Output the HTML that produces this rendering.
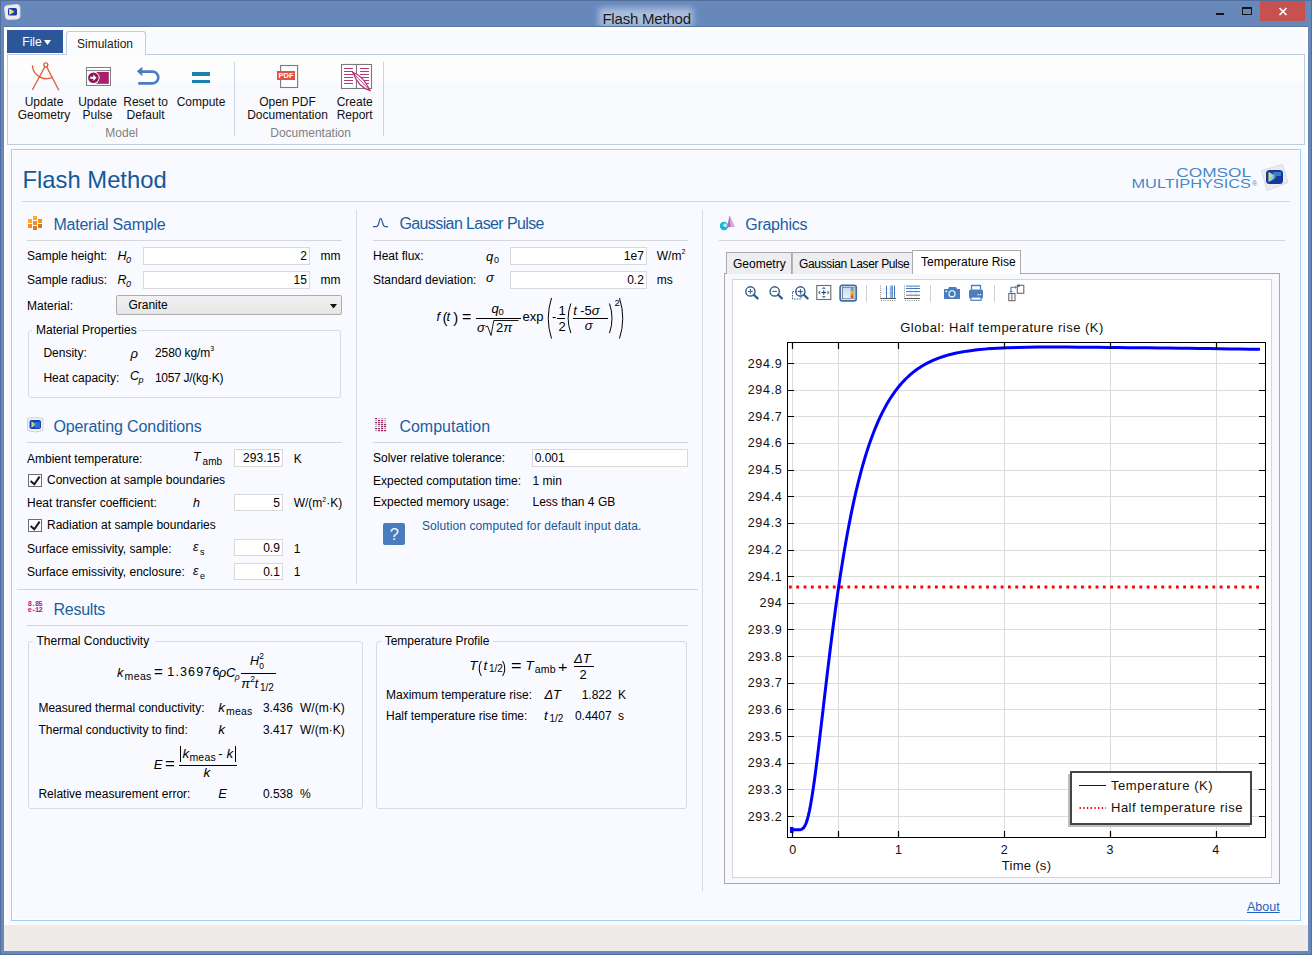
<!DOCTYPE html>
<html><head><meta charset="utf-8"><title>Flash Method</title><style>*{margin:0;padding:0}
html,body{width:1312px;height:955px;overflow:hidden;background:#6a8bbf}
body{position:relative;font-family:"Liberation Sans",sans-serif}
.t{position:absolute;white-space:nowrap;line-height:1;font-family:"Liberation Sans",sans-serif}
.b{position:absolute;box-sizing:border-box}
sup{line-height:0}
</style></head><body>
<div class="b" style="left:0px;top:0px;width:1312px;height:955px;background:#6888bc"></div>
<div class="b" style="left:0px;top:0px;width:1312px;height:1px;background:#52709c"></div>
<div class="b" style="left:0px;top:0px;width:1px;height:955px;background:#52709c"></div>
<div class="b" style="left:1311px;top:0px;width:1px;height:955px;background:#52709c"></div>
<div class="b" style="left:0px;top:954px;width:1312px;height:1px;background:#52709c"></div>
<div class="b" style="left:599px;top:8px;width:94px;height:19px;background:rgba(225,235,250,0.55);filter:blur(3px)"></div>
<div class="t" style="left:602.4px;top:11.00px;font-size:15px;color:#1a1a1a;letter-spacing:-0.2px">Flash Method</div>
<svg class="b" style="left:3px;top:3px;" width="19" height="18" viewBox="0 0 19 18"><defs><linearGradient id="ag" x1="0" y1="0" x2="1" y2="0"><stop offset="0" stop-color="#fff070"/><stop offset="0.45" stop-color="#f0e050"/><stop offset="0.7" stop-color="#60c0f0"/><stop offset="1" stop-color="#1030a0"/></linearGradient></defs><path d="M1.5 6 Q1 3 4 2.5 L14 1.5 Q16.5 1.5 17 4 L17 13 Q17 15.5 14.5 16 L6 16.5 Q3 16.8 2.5 14 Z" fill="#ececee" stroke="#dcdce0" stroke-width="0.8"/><rect x="5" y="5" width="9" height="7.5" rx="1.5" fill="#1a3aa8"/><path d="M6.2 5.8 L12.5 8.7 L6.2 11.7 Z" fill="url(#ag)"/></svg>
<div class="b" style="left:1216px;top:13px;width:8px;height:2px;background:#151515"></div>
<div class="b" style="left:1242px;top:7px;width:10px;height:8px;border:1px solid #151515;border-top-width:2px"></div>
<div class="b" style="left:1260px;top:1px;width:45px;height:20px;background:#c75050"></div>
<svg class="b" style="left:1278px;top:7px;" width="10" height="9" viewBox="0 0 10 9"><path d="M1.5 1 L8.5 8 M8.5 1 L1.5 8" stroke="#fff" stroke-width="1.7"/></svg>
<div class="b" style="left:4px;top:27px;width:1304px;height:924px;background:#ffffff"></div>
<div class="b" style="left:4px;top:26px;width:1304px;height:1px;background:#5b78a4"></div>
<div class="b" style="left:7px;top:30px;width:1298px;height:25px;background:#f9fafd"></div>
<div class="b" style="left:7px;top:30px;width:56px;height:23px;background:#2b579a"></div>
<div class="t" style="left:22.3px;top:36.14px;font-size:12px;color:#fff;">File</div>
<svg class="b" style="left:44px;top:40px;" width="8" height="6" viewBox="0 0 8 6"><polygon points="0,0 7,0 3.5,5" fill="#fff"/></svg>
<div class="b" style="left:7px;top:54px;width:1298px;height:91px;background:linear-gradient(#fdfdfe 0px,#fdfdfe 26px,#f9fafe 27px);border:1px solid #bfcde0"></div>
<div class="b" style="left:66px;top:31px;width:80px;height:24px;background:#fbfcfe;border:1px solid #bfcde0;border-bottom:none;border-radius:3px 3px 0 0"></div>
<div class="t" style="left:77px;top:37.84px;font-size:12px;color:#222;">Simulation</div>
<div class="b" style="left:234px;top:62px;width:1px;height:74px;background:#c9d5e4"></div>
<div class="b" style="left:383px;top:62px;width:1px;height:74px;background:#c9d5e4"></div>
<div class="t" style="left:44px;transform:translateX(-50%);top:96.14px;font-size:12px;color:#111;">Update</div>
<div class="t" style="left:44px;transform:translateX(-50%);top:109.14px;font-size:12px;color:#111;">Geometry</div>
<div class="t" style="left:97.5px;transform:translateX(-50%);top:96.14px;font-size:12px;color:#111;">Update</div>
<div class="t" style="left:97.5px;transform:translateX(-50%);top:109.14px;font-size:12px;color:#111;">Pulse</div>
<div class="t" style="left:145.6px;transform:translateX(-50%);top:96.14px;font-size:12px;color:#111;">Reset to</div>
<div class="t" style="left:145.6px;transform:translateX(-50%);top:109.14px;font-size:12px;color:#111;">Default</div>
<div class="t" style="left:201px;transform:translateX(-50%);top:96.14px;font-size:12px;color:#111;">Compute</div>
<div class="t" style="left:287.5px;transform:translateX(-50%);top:96.14px;font-size:12px;color:#111;">Open PDF</div>
<div class="t" style="left:287.5px;transform:translateX(-50%);top:109.14px;font-size:12px;color:#111;">Documentation</div>
<div class="t" style="left:354.7px;transform:translateX(-50%);top:96.14px;font-size:12px;color:#111;">Create</div>
<div class="t" style="left:354.7px;transform:translateX(-50%);top:109.14px;font-size:12px;color:#111;">Report</div>
<div class="t" style="left:121.7px;transform:translateX(-50%);top:127.04px;font-size:12px;color:#808080;">Model</div>
<div class="t" style="left:310.6px;transform:translateX(-50%);top:127.04px;font-size:12px;color:#808080;">Documentation</div>
<svg class="b" style="left:29px;top:61px;" width="32" height="31" viewBox="0 0 32 31"><g fill="none" stroke="#e0603c" stroke-width="1.35"><circle cx="16.8" cy="3.8" r="2"/><path d="M16 5.6 L3.3 29 M17.6 5.6 L29.8 29.3"/><path d="M3.4 4.2 A14 14 0 0 0 23.3 16.3"/></g></svg>
<svg class="b" style="left:85px;top:66px;" width="28" height="22" viewBox="0 0 28 22"><rect x="1.5" y="1.5" width="24" height="18" fill="#fff" stroke="#808080" stroke-width="1"/><line x1="1.5" y1="4.6" x2="26" y2="4.6" stroke="#808080" stroke-width="1"/><rect x="11.3" y="6" width="12.5" height="11.8" fill="#aa1f6c"/><circle cx="8.4" cy="11.8" r="6.2" fill="#fff"/><circle cx="8.4" cy="11.8" r="5.3" fill="#8c1a5b"/><path d="M5.2 11.8 H9.2" stroke="#fff" stroke-width="2"/><polygon points="8.3,8.6 11.6,11.8 8.3,15" fill="#fff"/></svg>
<svg class="b" style="left:135px;top:64px;" width="28" height="24" viewBox="0 0 28 24"><path d="M6.5 7.7 H17.5 A5.8 5.8 0 0 1 17.5 19.3 H3.3" fill="none" stroke="#4a7dbf" stroke-width="2.7"/><polygon points="1.8,7.3 7.3,2.7 7.3,12.2" fill="#4a7dbf"/></svg>
<div class="b" style="left:192px;top:72px;width:18px;height:3.5px;background:#1b82ab"></div>
<div class="b" style="left:192px;top:79.5px;width:18px;height:3.5px;background:#1b82ab"></div>
<svg class="b" style="left:276px;top:64px;" width="24" height="26" viewBox="0 0 24 26"><rect x="4.6" y="1.5" width="17" height="22" fill="#fff" stroke="#7a7a7a" stroke-width="1.1"/><rect x="1" y="7" width="18" height="9" fill="#e24f43"/><text x="10" y="14.3" font-size="7.5" font-family="Liberation Sans" font-weight="bold" fill="#fff" text-anchor="middle">PDF</text></svg>
<svg class="b" style="left:339px;top:62px;" width="35" height="30" viewBox="0 0 35 30"><g fill="#fff" stroke="#7a7a7a" stroke-width="1.1"><rect x="2.5" y="2.5" width="15" height="24"/><rect x="17.5" y="2.5" width="15" height="24"/></g><path d="M5 6.5 H14 M5 9.5 H14 M5 12.5 H14 M5 15.5 H14 M5 18.5 H14 M5 21.5 H14 M21 6.5 H30 M21 9.5 H30 M21 12.5 H30 M21 15.5 H30 M21 18.5 H30 M21 21.5 H30 " stroke="#b0206c" stroke-width="0.9"/><path d="M14 10.5 Q24 13.5 31 28.5 Q19 25 14 10.5 Z" fill="#fff" stroke="#b0206c" stroke-width="1.1"/><path d="M12 9 L31 28.5" stroke="#b0206c" stroke-width="0.9"/></svg>
<div class="b" style="left:7px;top:146px;width:1298px;height:779px;background:#f9fafd"></div>
<div class="b" style="left:11px;top:149px;width:1290px;height:772px;background:#f9faff;border:1px solid #9fd0f5;box-shadow:inset 0 0 0 1px #fff"></div>
<div class="b" style="left:4px;top:925px;width:1304px;height:26px;background:#efebe9"></div>
<div class="t" style="left:22.5px;top:168.05px;font-size:23.8px;color:#135899;">Flash Method</div>
<div class="b" style="left:22px;top:201px;width:1268px;height:1px;background:#d4d6da"></div>
<svg class="b" style="left:1125px;top:165px;" width="140" height="26" viewBox="0 0 140 26"><g font-family="Liberation Sans" font-size="12" fill="#2c78be" fill-opacity="0.9"><text x="51.3" y="11.7" textLength="74.7" lengthAdjust="spacingAndGlyphs">COMSOL</text><text x="6.5" y="23" textLength="119.5" lengthAdjust="spacingAndGlyphs">MULTIPHYSICS</text><text x="127" y="21" font-size="7">&#174;</text></g></svg>
<svg class="b" style="left:1259px;top:163px;" width="31" height="29" viewBox="0 0 31 29"><defs><linearGradient id="cg2" x1="0" y1="0" x2="1" y2="0.2"><stop offset="0" stop-color="#f4ec50"/><stop offset="0.55" stop-color="#78c8ec"/><stop offset="1" stop-color="#0c2c94"/></linearGradient></defs><polygon points="2.5,7.5 23.5,1.5 29,19.5 8,27.5" fill="#ececef" stroke="#dcdce0"/><rect x="7" y="7" width="17" height="14" rx="3.5" fill="#15379e"/><path d="M9.5 9 L19 14 L9.5 19 Z" fill="url(#cg2)"/><path d="M14 9 H22 V13 H14 Z" fill="#5ab4e8" opacity="0.55"/></svg>
<div class="b" style="left:356px;top:210px;width:1px;height:374px;background:#d9dadd"></div>
<div class="b" style="left:702px;top:210px;width:1px;height:681px;background:#d9dadd"></div>
<div class="b" style="left:17px;top:589px;width:681px;height:1px;background:#d4d6da"></div>
<svg class="b" style="left:27px;top:215px;" width="16" height="16" viewBox="0 0 16 16"><g><rect x="1" y="4" width="4" height="4" fill="#ffab1c"/><rect x="6" y="1" width="4" height="4" fill="#ffab1c"/><rect x="11" y="4" width="4" height="4" fill="#f58e1e"/><rect x="6" y="6" width="4" height="4" fill="#f58e1e"/><rect x="1" y="9" width="4" height="4" fill="#f58e1e"/><rect x="11" y="9" width="4" height="4" fill="#d47a1c"/><rect x="6" y="11" width="4" height="4" fill="#d47a1c"/></g></svg>
<div class="t" style="left:53.5px;top:216.86px;font-size:16px;color:#1b5e9f;letter-spacing:-0.25px">Material Sample</div>
<div class="b" style="left:27px;top:240px;width:315px;height:1px;background:#d4d6da"></div>
<div class="t" style="left:27px;top:249.84px;font-size:12px;color:#000;">Sample height:</div>
<div class="t" style="left:117.6px;top:250.42px;font-size:12.5px;color:#000;font-style:italic">H</div>
<div class="t" style="left:126px;top:256.38px;font-size:9px;color:#000;font-style:italic">0</div>
<div class="b" style="left:143px;top:247px;width:167px;height:18px;background:#fff;border:1px solid #d9d9d9"></div>
<div class="t" style="right:1005.2px;top:249.94px;font-size:12px;color:#000;">2</div>
<div class="t" style="left:320.5px;top:249.84px;font-size:12px;color:#000;">mm</div>
<div class="t" style="left:27px;top:273.84px;font-size:12px;color:#000;">Sample radius:</div>
<div class="t" style="left:117.6px;top:274.42px;font-size:12.5px;color:#000;font-style:italic">R</div>
<div class="t" style="left:126px;top:280.38px;font-size:9px;color:#000;font-style:italic">0</div>
<div class="b" style="left:143px;top:271px;width:167px;height:18px;background:#fff;border:1px solid #d9d9d9"></div>
<div class="t" style="right:1005.2px;top:273.94px;font-size:12px;color:#000;">15</div>
<div class="t" style="left:320.5px;top:273.84px;font-size:12px;color:#000;">mm</div>
<div class="t" style="left:27px;top:299.54px;font-size:12px;color:#000;">Material:</div>
<div class="b" style="left:116px;top:295px;width:226px;height:20px;background:linear-gradient(#f2f2f2,#e6e6e6);border:1px solid #acacac;border-radius:2px"></div>
<div class="t" style="left:128.4px;top:299.04px;font-size:12px;color:#000;">Granite</div>
<svg class="b" style="left:330px;top:304px;" width="8" height="5" viewBox="0 0 8 5"><polygon points="0,0 7,0 3.5,4.5" fill="#111"/></svg>
<div class="b" style="left:28px;top:330px;width:313px;height:68px;border:1px solid #d5dbe2;border-radius:3px"></div>
<div class="b" style="left:32px;top:326px;width:106px;height:8px;background:#f9faff"></div>
<div class="t" style="left:36px;top:324.44px;font-size:12px;color:#000;">Material Properties</div>
<div class="t" style="left:43.4px;top:347.34px;font-size:12px;color:#000;">Density:</div>
<div class="t" style="left:130.4px;top:346.50px;font-size:13px;color:#000;font-style:italic">&rho;</div>
<div class="t" style="left:155px;top:347.34px;font-size:12px;color:#000;letter-spacing:-0.1px">2580 kg/m<sup style="font-size:7px;vertical-align:6px">3</sup></div>
<div class="t" style="left:43.4px;top:371.54px;font-size:12px;color:#000;">Heat capacity:</div>
<div class="t" style="left:130px;top:369.92px;font-size:12.5px;color:#000;font-style:italic">C</div>
<div class="t" style="left:138.5px;top:376.38px;font-size:9px;color:#000;font-style:italic">p</div>
<div class="t" style="left:155px;top:371.54px;font-size:12px;color:#000;letter-spacing:-0.3px">1057 J/(kg&middot;K)</div>
<svg class="b" style="left:26px;top:416px;" width="19" height="18" viewBox="0 0 19 18"><defs><linearGradient id="og" x1="0" y1="0" x2="1" y2="0"><stop offset="0" stop-color="#f4ee60"/><stop offset="0.45" stop-color="#6fc0f0"/><stop offset="1" stop-color="#0a2a90"/></linearGradient></defs><path d="M1.5 2.5 Q9 0.5 17 2.5 V14.5 Q9 17.5 1.5 14.5 Z" fill="#f2f2f4" stroke="#d2d2d6" stroke-width="1"/><rect x="3.5" y="4" width="11.5" height="9" rx="2" fill="#1840b0"/><path d="M5.5 5.5 L11.5 8.5 L5.5 11.5 Z" fill="url(#og)"/><path d="M9 6 H14 V12 H9 Z" fill="#3a8ae0" opacity="0.6"/></svg>
<div class="t" style="left:53.4px;top:419.06px;font-size:16px;color:#1b5e9f;letter-spacing:-0.1px">Operating Conditions</div>
<div class="b" style="left:27px;top:442px;width:315px;height:1px;background:#d4d6da"></div>
<div class="t" style="left:27px;top:452.54px;font-size:12px;color:#000;">Ambient temperature:</div>
<div class="t" style="left:193px;top:451.42px;font-size:12.5px;color:#000;font-style:italic">T</div>
<div class="t" style="left:202.6px;top:457.04px;font-size:10px;color:#000;">amb</div>
<div class="b" style="left:234px;top:449px;width:49px;height:18px;background:#fff;border:1px solid #d9d9d9"></div>
<div class="t" style="right:1032.2px;top:451.94px;font-size:12px;color:#000;">293.15</div>
<div class="t" style="left:293.7px;top:452.54px;font-size:12px;color:#000;">K</div>
<div class="b" style="left:28px;top:474px;width:14px;height:13px;background:#fff;border:1px solid #6e6e6e"></div>
<svg class="b" style="left:28px;top:474px;" width="14" height="13" viewBox="0 0 14 13"><path d="M2.6 7 L6.3 10.3 L11.6 2.6" stroke="#1a1a1a" stroke-width="2" fill="none"/></svg>
<div class="t" style="left:47px;top:474.44px;font-size:12px;color:#000;">Convection at sample boundaries</div>
<div class="t" style="left:27px;top:497.24px;font-size:12px;color:#000;">Heat transfer coefficient:</div>
<div class="t" style="left:193px;top:496.82px;font-size:12.5px;color:#000;font-style:italic">h</div>
<div class="b" style="left:234px;top:494px;width:49px;height:17px;background:#fff;border:1px solid #d9d9d9"></div>
<div class="t" style="right:1032.2px;top:496.94px;font-size:12px;color:#000;">5</div>
<div class="t" style="left:293.7px;top:497.24px;font-size:12px;color:#000;">W/(m<sup style="font-size:7px;vertical-align:5px">2</sup>&middot;K)</div>
<div class="b" style="left:28px;top:519px;width:14px;height:13px;background:#fff;border:1px solid #6e6e6e"></div>
<svg class="b" style="left:28px;top:519px;" width="14" height="13" viewBox="0 0 14 13"><path d="M2.6 7 L6.3 10.3 L11.6 2.6" stroke="#1a1a1a" stroke-width="2" fill="none"/></svg>
<div class="t" style="left:47px;top:519.14px;font-size:12px;color:#000;">Radiation at sample boundaries</div>
<div class="t" style="left:27px;top:542.84px;font-size:12px;color:#000;">Surface emissivity, sample:</div>
<div class="t" style="left:193px;top:541.42px;font-size:12.5px;color:#000;font-style:italic">&epsilon;</div>
<div class="t" style="left:200px;top:548.38px;font-size:9px;color:#000;">s</div>
<div class="b" style="left:234px;top:539px;width:49px;height:17px;background:#fff;border:1px solid #d9d9d9"></div>
<div class="t" style="right:1032.2px;top:541.94px;font-size:12px;color:#000;">0.9</div>
<div class="t" style="left:293.7px;top:542.84px;font-size:12px;color:#000;">1</div>
<div class="t" style="left:27px;top:566.34px;font-size:12px;color:#000;">Surface emissivity, enclosure:</div>
<div class="t" style="left:193px;top:564.92px;font-size:12.5px;color:#000;font-style:italic">&epsilon;</div>
<div class="t" style="left:200px;top:571.88px;font-size:9px;color:#000;">e</div>
<div class="b" style="left:234px;top:563px;width:49px;height:17px;background:#fff;border:1px solid #d9d9d9"></div>
<div class="t" style="right:1032.2px;top:565.94px;font-size:12px;color:#000;">0.1</div>
<div class="t" style="left:293.7px;top:566.34px;font-size:12px;color:#000;">1</div>
<svg class="b" style="left:372px;top:216px;" width="17" height="13" viewBox="0 0 17 13"><path d="M1 10.5 H4.5 Q6 10.5 7 6.5 Q8 2.4 8.5 2.4 Q9.5 2.4 10.5 6.5 Q11.5 10.5 13 10.5 H16" fill="none" stroke="#2f5f98" stroke-width="1.25"/></svg>
<div class="t" style="left:399.4px;top:216.06px;font-size:16px;color:#1b5e9f;letter-spacing:-0.6px">Gaussian Laser Pulse</div>
<div class="b" style="left:373px;top:240px;width:315px;height:1px;background:#d4d6da"></div>
<div class="t" style="left:373px;top:250.24px;font-size:12px;color:#000;">Heat flux:</div>
<div class="t" style="left:486px;top:249.50px;font-size:13px;color:#000;font-style:italic">q</div>
<div class="t" style="left:494px;top:255.88px;font-size:9px;color:#000;">0</div>
<div class="b" style="left:510px;top:247px;width:137px;height:18px;background:#fff;border:1px solid #d9d9d9"></div>
<div class="t" style="right:668.2px;top:249.94px;font-size:12px;color:#000;">1e7</div>
<div class="t" style="left:656.8px;top:250.24px;font-size:12px;color:#000;">W/m<sup style="font-size:7px;vertical-align:6px">2</sup></div>
<div class="t" style="left:373px;top:273.54px;font-size:12px;color:#000;">Standard deviation:</div>
<div class="t" style="left:486px;top:271.00px;font-size:13px;color:#000;font-style:italic">&sigma;</div>
<div class="b" style="left:510px;top:271px;width:137px;height:18px;background:#fff;border:1px solid #d9d9d9"></div>
<div class="t" style="right:668.2px;top:273.94px;font-size:12px;color:#000;">0.2</div>
<div class="t" style="left:656.8px;top:273.54px;font-size:12px;color:#000;">ms</div>
<div class="t" style="left:436.5px;top:310.00px;font-size:13px;color:#000;"><i>f</i></div>
<div class="t" style="left:442.5px;top:309.80px;font-size:15px;color:#000;font-weight:100">(</div>
<div class="t" style="left:446.5px;top:310.00px;font-size:13px;color:#000;"><i>t</i></div>
<div class="t" style="left:453.2px;top:309.80px;font-size:15px;color:#000;">)</div>
<div class="t" style="left:462px;top:309.65px;font-size:14px;color:#000;transform:scaleX(1.15);transform-origin:left">=</div>
<div class="t" style="left:491.5px;top:301.80px;font-size:13px;color:#000;"><i>q</i></div>
<div class="t" style="left:498.6px;top:306.96px;font-size:9.5px;color:#000;">0</div>
<div class="b" style="left:476px;top:318px;width:45px;height:1px;background:#000"></div>
<div class="t" style="left:477px;top:321.40px;font-size:13px;color:#000;"><i>&sigma;</i></div>
<svg class="b" style="left:484px;top:318px;" width="37" height="19" viewBox="0 0 37 19"><path d="M1.5 9 L3.5 8 L7 17.5 L9.8 2.5 H34.5" fill="none" stroke="#000" stroke-width="0.9"/></svg>
<div class="t" style="left:496px;top:321.40px;font-size:13px;color:#000;letter-spacing:0.3px">2<i>&pi;</i></div>
<div class="t" style="left:522.5px;top:310.00px;font-size:13px;color:#000;">exp</div>
<svg class="b" style="left:540px;top:295px;" width="90" height="46" viewBox="0 0 90 46"><g fill="none" stroke="#000" stroke-width="1"><path d="M11.5 3 Q5 23.5 11.5 43.5"/><path d="M30.8 8.5 Q25.5 23.5 30.8 38"/><path d="M69.5 8.5 Q74.5 23.5 69.5 38"/><path d="M79.5 3 Q86 23.5 79.5 43.5"/></g></svg>
<div class="t" style="left:552px;top:310.00px;font-size:13px;color:#000;">-</div>
<div class="t" style="left:558.4px;top:303.90px;font-size:13px;color:#000;">1</div>
<div class="b" style="left:557.3px;top:318px;width:7.7000000000000455px;height:1px;background:#000"></div>
<div class="t" style="left:558.4px;top:319.90px;font-size:13px;color:#000;">2</div>
<div class="t" style="left:573.3px;top:303.90px;font-size:13px;color:#000;letter-spacing:-0.1px"><i>t</i>&nbsp;-5<i>&sigma;</i></div>
<div class="b" style="left:572.5px;top:318px;width:35.5px;height:1px;background:#000"></div>
<div class="t" style="left:584.7px;top:319.10px;font-size:13px;color:#000;"><i>&sigma;</i></div>
<div class="t" style="left:614.5px;top:298.46px;font-size:9.5px;color:#000;">2</div>
<svg class="b" style="left:374px;top:417px;" width="14" height="16" viewBox="0 0 14 16"><rect x="1" y="1" width="2.2" height="1.2" rx="0.5" fill="#a2145e"/><rect x="4" y="1" width="2.2" height="1.2" rx="0.5" fill="#b4b4b4"/><rect x="7" y="1" width="2.2" height="1.2" rx="0.5" fill="#b4b4b4"/><rect x="10" y="1" width="2.2" height="1.2" rx="0.5" fill="#b4b4b4"/><rect x="1" y="3" width="2.2" height="1.2" rx="0.5" fill="#b4b4b4"/><rect x="4" y="3" width="2.2" height="1.2" rx="0.5" fill="#a2145e"/><rect x="7" y="3" width="2.2" height="1.2" rx="0.5" fill="#a2145e"/><rect x="10" y="3" width="2.2" height="1.2" rx="0.5" fill="#b4b4b4"/><rect x="1" y="5" width="2.2" height="1.2" rx="0.5" fill="#a2145e"/><rect x="4" y="5" width="2.2" height="1.2" rx="0.5" fill="#a2145e"/><rect x="7" y="5" width="2.2" height="1.2" rx="0.5" fill="#a2145e"/><rect x="10" y="5" width="2.2" height="1.2" rx="0.5" fill="#b4b4b4"/><rect x="1" y="7" width="2.2" height="1.2" rx="0.5" fill="#b4b4b4"/><rect x="4" y="7" width="2.2" height="1.2" rx="0.5" fill="#a2145e"/><rect x="7" y="7" width="2.2" height="1.2" rx="0.5" fill="#a2145e"/><rect x="10" y="7" width="2.2" height="1.2" rx="0.5" fill="#a2145e"/><rect x="1" y="9" width="2.2" height="1.2" rx="0.5" fill="#b4b4b4"/><rect x="4" y="9" width="2.2" height="1.2" rx="0.5" fill="#b4b4b4"/><rect x="7" y="9" width="2.2" height="1.2" rx="0.5" fill="#a2145e"/><rect x="10" y="9" width="2.2" height="1.2" rx="0.5" fill="#a2145e"/><rect x="1" y="11" width="2.2" height="1.2" rx="0.5" fill="#a2145e"/><rect x="4" y="11" width="2.2" height="1.2" rx="0.5" fill="#a2145e"/><rect x="7" y="11" width="2.2" height="1.2" rx="0.5" fill="#a2145e"/><rect x="10" y="11" width="2.2" height="1.2" rx="0.5" fill="#b4b4b4"/><rect x="1" y="13" width="2.2" height="1.2" rx="0.5" fill="#b4b4b4"/><rect x="4" y="13" width="2.2" height="1.2" rx="0.5" fill="#a2145e"/><rect x="7" y="13" width="2.2" height="1.2" rx="0.5" fill="#a2145e"/><rect x="10" y="13" width="2.2" height="1.2" rx="0.5" fill="#a2145e"/></svg>
<div class="t" style="left:399.4px;top:418.86px;font-size:16px;color:#1b5e9f;letter-spacing:0px">Computation</div>
<div class="b" style="left:373px;top:442px;width:315px;height:1px;background:#d4d6da"></div>
<div class="t" style="left:373px;top:452.44px;font-size:12px;color:#000;">Solver relative tolerance:</div>
<div class="b" style="left:532px;top:449px;width:156px;height:18px;background:#fff;border:1px solid #d9d9d9"></div>
<div class="t" style="left:534.7px;top:451.94px;font-size:12px;color:#000;">0.001</div>
<div class="t" style="left:373px;top:474.84px;font-size:12px;color:#000;">Expected computation time:</div>
<div class="t" style="left:532.5px;top:474.84px;font-size:12px;color:#000;">1 min</div>
<div class="t" style="left:373px;top:496.04px;font-size:12px;color:#000;">Expected memory usage:</div>
<div class="t" style="left:532.5px;top:496.04px;font-size:12px;color:#000;">Less than 4 GB</div>
<div class="b" style="left:383px;top:523px;width:22px;height:22px;background:#4a7dbd;border-radius:2px"></div>
<div class="t" style="left:394.3px;transform:translateX(-50%);top:525.83px;font-size:16.5px;color:#f4f7fb;">?</div>
<div class="t" style="left:421.9px;top:520.44px;font-size:12px;color:#15579a;letter-spacing:0.1px">Solution computed for default input data.</div>
<svg class="b" style="left:26px;top:599px;" width="18" height="15" viewBox="0 0 18 15"><text x="9" y="7.3" font-size="7" font-family="Liberation Mono" font-weight="bold" fill="#b01a6e" text-anchor="middle" letter-spacing="-0.6">8.85</text><text x="9" y="13.3" font-size="7" font-family="Liberation Mono" font-weight="bold" fill="#b01a6e" text-anchor="middle" letter-spacing="-0.6">e-12</text></svg>
<div class="t" style="left:53.5px;top:601.66px;font-size:16px;color:#1b5e9f;letter-spacing:-0.25px">Results</div>
<div class="b" style="left:27px;top:625px;width:661px;height:1px;background:#d4d6da"></div>
<div class="b" style="left:28px;top:641px;width:335px;height:168px;border:1px solid #d5dbe2;border-radius:3px"></div>
<div class="b" style="left:33px;top:636px;width:122px;height:9px;background:#f9faff"></div>
<div class="t" style="left:36.5px;top:634.84px;font-size:12px;color:#000;">Thermal Conductivity</div>
<div class="t" style="left:117px;top:665.60px;font-size:13px;color:#000;"><i>k</i></div>
<div class="t" style="left:124.6px;top:670.91px;font-size:10.5px;color:#000;letter-spacing:0.35px">meas</div>
<div class="t" style="left:154.3px;top:665.15px;font-size:14px;color:#000;transform:scaleX(1.1);transform-origin:left">=</div>
<div class="t" style="left:167.3px;top:666.02px;font-size:12.5px;color:#000;letter-spacing:1.15px">1.36976</div>
<div class="t" style="left:218.8px;top:665.60px;font-size:13px;color:#000;"><i>&rho;</i></div>
<div class="t" style="left:226px;top:665.60px;font-size:13px;color:#000;"><i>C</i></div>
<div class="t" style="left:234.7px;top:672.80px;font-size:8.5px;color:#000;"><i>&rho;</i></div>
<div class="b" style="left:240.5px;top:673px;width:35.0px;height:1px;background:#000"></div>
<div class="t" style="left:249.9px;top:655.42px;font-size:12.5px;color:#000;"><i>H</i></div>
<div class="t" style="left:259.3px;top:651.60px;font-size:8.5px;color:#000;">2</div>
<div class="t" style="left:259.3px;top:662.40px;font-size:8.5px;color:#000;">0</div>
<div class="t" style="left:241.2px;top:677.40px;font-size:13px;color:#000;"><i>&pi;</i></div>
<div class="t" style="left:250.3px;top:675.40px;font-size:8.5px;color:#000;">2</div>
<div class="t" style="left:254.7px;top:677.82px;font-size:12.5px;color:#000;"><i>t</i></div>
<div class="t" style="left:260px;top:682.53px;font-size:10px;color:#000;">1/2</div>
<div class="t" style="left:38.4px;top:701.94px;font-size:12px;color:#000;">Measured thermal conductivity:</div>
<div class="t" style="left:218.2px;top:700.67px;font-size:13.5px;color:#000;"><i>k</i></div>
<div class="t" style="left:226px;top:706.11px;font-size:10.5px;color:#000;letter-spacing:0.2px">meas</div>
<div class="t" style="left:262.9px;top:701.94px;font-size:12px;color:#000;">3.436</div>
<div class="t" style="left:300px;top:701.94px;font-size:12px;color:#000;">W/(m&middot;K)</div>
<div class="t" style="left:38.4px;top:723.84px;font-size:12px;color:#000;">Thermal conductivity to find:</div>
<div class="t" style="left:218.2px;top:722.57px;font-size:13.5px;color:#000;"><i>k</i></div>
<div class="t" style="left:262.9px;top:723.84px;font-size:12px;color:#000;">3.417</div>
<div class="t" style="left:300px;top:723.84px;font-size:12px;color:#000;">W/(m&middot;K)</div>
<div class="t" style="left:153.7px;top:758.20px;font-size:13px;color:#000;"><i>E</i></div>
<div class="t" style="left:165.3px;top:757.15px;font-size:14px;color:#000;transform:scaleX(1.2);transform-origin:left">=</div>
<div class="b" style="left:178.9px;top:765px;width:58.599999999999994px;height:1px;background:#000"></div>
<div class="b" style="left:180.3px;top:745.5px;width:1px;height:16.5px;background:#000"></div>
<div class="t" style="left:182.5px;top:746.57px;font-size:13.5px;color:#000;"><i>k</i></div>
<div class="t" style="left:189.4px;top:752.11px;font-size:10.5px;color:#000;letter-spacing:0.2px">meas</div>
<div class="t" style="left:218.2px;top:747.00px;font-size:13px;color:#000;">-</div>
<div class="t" style="left:226.4px;top:746.57px;font-size:13.5px;color:#000;"><i>k</i></div>
<div class="b" style="left:234.6px;top:745.5px;width:1px;height:16.5px;background:#000"></div>
<div class="t" style="left:203.6px;top:765.97px;font-size:13.5px;color:#000;"><i>k</i></div>
<div class="t" style="left:38.4px;top:787.84px;font-size:12px;color:#000;">Relative measurement error:</div>
<div class="t" style="left:218.2px;top:787.00px;font-size:13px;color:#000;"><i>E</i></div>
<div class="t" style="left:262.9px;top:787.84px;font-size:12px;color:#000;">0.538</div>
<div class="t" style="left:300px;top:787.84px;font-size:12px;color:#000;">%</div>
<div class="b" style="left:376px;top:641px;width:311px;height:168px;border:1px solid #d5dbe2;border-radius:3px"></div>
<div class="b" style="left:381px;top:636px;width:112px;height:9px;background:#f9faff"></div>
<div class="t" style="left:384.7px;top:634.54px;font-size:12px;color:#000;">Temperature Profile</div>
<div class="t" style="left:469.2px;top:659.37px;font-size:13.5px;color:#000;"><i>T</i></div>
<div class="t" style="left:478px;top:658.61px;font-size:17px;color:#000;transform:scaleX(0.7);transform-origin:left">(</div>
<div class="t" style="left:483.5px;top:659.37px;font-size:13.5px;color:#000;"><i>t</i></div>
<div class="t" style="left:489px;top:664.03px;font-size:10px;color:#000;">1/2</div>
<div class="t" style="left:502px;top:658.61px;font-size:17px;color:#000;transform:scaleX(0.7);transform-origin:left">)</div>
<div class="t" style="left:510.5px;top:659.45px;font-size:14px;color:#000;transform:scaleX(1.3);transform-origin:left">=</div>
<div class="t" style="left:525.5px;top:659.37px;font-size:13.5px;color:#000;"><i>T</i></div>
<div class="t" style="left:534.8px;top:663.61px;font-size:10.5px;color:#000;letter-spacing:0.2px">amb</div>
<div class="t" style="left:557.5px;top:658.80px;font-size:15px;color:#000;transform:scaleX(1.1);transform-origin:left">+</div>
<div class="b" style="left:573.5px;top:666px;width:20.5px;height:1px;background:#000"></div>
<div class="t" style="left:574px;top:652.40px;font-size:13px;color:#000;"><i>&Delta;T</i></div>
<div class="t" style="left:579.5px;top:667.80px;font-size:13px;color:#000;">2</div>
<div class="t" style="left:386px;top:688.84px;font-size:12px;color:#000;">Maximum temperature rise:</div>
<div class="t" style="left:544.4px;top:688.00px;font-size:13px;color:#000;"><i>&Delta;T</i></div>
<div class="t" style="left:581.7px;top:688.84px;font-size:12px;color:#000;">1.822</div>
<div class="t" style="left:618px;top:688.84px;font-size:12px;color:#000;">K</div>
<div class="t" style="left:386px;top:710.04px;font-size:12px;color:#000;">Half temperature rise time:</div>
<div class="t" style="left:544px;top:708.77px;font-size:13.5px;color:#000;"><i>t</i></div>
<div class="t" style="left:549.5px;top:714.03px;font-size:10px;color:#000;">1/2</div>
<div class="t" style="left:574.9px;top:710.04px;font-size:12px;color:#000;">0.4407</div>
<div class="t" style="left:618px;top:710.04px;font-size:12px;color:#000;">s</div>
<svg class="b" style="left:718px;top:214px;" width="18" height="17" viewBox="0 0 18 17"><polygon points="11.5,1.5 16.5,12.5 9,13.5" fill="#b06ab8"/><polygon points="11.5,1.5 16.5,12.5 12.5,13" fill="#d8a8dc"/><circle cx="6" cy="12" r="4.2" fill="#14b4d6"/><circle cx="7.2" cy="11.2" r="2" fill="#b8ecf6"/></svg>
<div class="t" style="left:745.2px;top:216.66px;font-size:16px;color:#1b5e9f;letter-spacing:-0.25px">Graphics</div>
<div class="b" style="left:719px;top:240px;width:566px;height:1px;background:#d4d6da"></div>
<div class="b" style="left:724px;top:273px;width:556px;height:611px;background:#f8f9fc;border:1px solid #a9a9a9"></div>
<div class="b" style="left:732px;top:279px;width:540px;height:599px;background:#fff;border:1px solid #d4d4d4"></div>
<div class="b" style="left:726px;top:252px;width:66px;height:22px;background:#eeeef0;border:1px solid #a9a9a9;border-bottom:none"></div>
<div class="t" style="left:733px;top:257.64px;font-size:12px;color:#000;">Geometry</div>
<div class="b" style="left:792px;top:252px;width:121px;height:22px;background:#eeeef0;border:1px solid #a9a9a9;border-bottom:none;border-left:1px solid #b5b5b5"></div>
<div class="t" style="left:799px;top:257.64px;font-size:12px;color:#000;letter-spacing:-0.35px">Gaussian Laser Pulse</div>
<div class="b" style="left:912px;top:250px;width:109px;height:24px;background:#fff;border:1px solid #acacac;border-bottom:none"></div>
<div class="t" style="left:921px;top:255.64px;font-size:12px;color:#000;">Temperature Rise</div>
<svg class="b" style="left:738px;top:280px;" width="130" height="26" viewBox="0 0 130 26"><g fill="none" stroke="#2e5a8c"><circle cx="12.4" cy="11.4" r="4.6" stroke-width="1.4"/><path d="M15.8 14.8 L19.6 18.4" stroke-width="2.2" stroke-linecap="round"/><path d="M10.0 11.4 H14.8" stroke-width="1"/><path d="M12.4 9.0 V13.8" stroke-width="1"/></g><g fill="none" stroke="#2e5a8c"><circle cx="36.7" cy="11.4" r="4.6" stroke-width="1.4"/><path d="M40.1 14.8 L43.900000000000006 18.4" stroke-width="2.2" stroke-linecap="round"/><path d="M34.300000000000004 11.4 H39.1" stroke-width="1"/></g><rect x="54.5" y="11.5" width="8.5" height="7.5" fill="none" stroke="#2e5a8c" stroke-width="1" stroke-dasharray="1.5 1.2"/><g fill="none" stroke="#2e5a8c"><circle cx="62.4" cy="11.4" r="4.6" stroke-width="1.4"/><path d="M65.8 14.8 L69.6 18.4" stroke-width="2.2" stroke-linecap="round"/><path d="M60.0 11.4 H64.8" stroke-width="1"/><path d="M62.4 9.0 V13.8" stroke-width="1"/></g><rect x="78.8" y="5.5" width="14" height="14" fill="none" stroke="#6a6a6a" stroke-width="1.1"/><g fill="#4a86c8"><path d="M85.8 6.8 L83.6 9 H88 Z M85.8 18.2 L83.6 16 H88 Z M80 12.5 L82.2 10.3 V14.7 Z M91.6 12.5 L89.4 10.3 V14.7 Z"/></g><path d="M85.8 10.2 V14.8 M83.5 12.5 H88.1" stroke="#333" stroke-width="1"/><defs><linearGradient id="lg1" x1="0" y1="0" x2="0" y2="1"><stop offset="0" stop-color="#c6dcf2"/><stop offset="1" stop-color="#e8f2fc"/></linearGradient><linearGradient id="lg2" x1="0" y1="0" x2="0" y2="1"><stop offset="0" stop-color="#5a7fb8"/><stop offset="0.45" stop-color="#f0c040"/><stop offset="1" stop-color="#e0202a"/></linearGradient></defs><rect x="102.2" y="5.3" width="16" height="15.5" rx="2" fill="#fff" stroke="#3d6db2" stroke-width="1.8"/><rect x="104.5" y="7.3" width="11.5" height="11.5" fill="url(#lg1)" stroke="#6a6a6a" stroke-width="0.8"/><rect x="112.6" y="8.3" width="2.4" height="9.5" fill="url(#lg2)"/></svg>
<div class="b" style="left:866px;top:285px;width:1px;height:17px;background:#d0d0d0"></div>
<svg class="b" style="left:878px;top:283px;" width="46" height="20" viewBox="0 0 46 20"><g stroke="#888" stroke-width="1" stroke-dasharray="1 1.2"><path d="M2.5 2.5 V16"/><path d="M3 17.5 H18"/><path d="M26.5 2.5 V16"/><path d="M27 17.5 H42"/></g><path d="M2.5 15.5 H18 M26.5 15.5 H42" stroke="#555" stroke-width="1"/><g stroke="#ddd" stroke-width="0.8"><path d="M3 6 H18 M3 10 H18"/><path d="M12 3 V15 M33 3 V15 M38 3 V15"/></g><g stroke="#3f78c0" stroke-width="1"><path d="M8.5 2.5 V15 M13 2.5 V15 M14.3 2.5 V15 M16.5 2.5 V15"/><path d="M28 3.1 H42 M28 5.5 H42 M28 8.6 H42 M28 12.2 H42"/></g></svg>
<div class="b" style="left:930px;top:285px;width:1px;height:17px;background:#d0d0d0"></div>
<svg class="b" style="left:942px;top:284px;" width="44" height="18" viewBox="0 0 44 18"><path d="M2 5 H6 L7 3 H14 L15 5 H18 V15 H2 Z" fill="#4a7fbd"/><circle cx="10" cy="9.8" r="3.6" fill="#fff"/><circle cx="10" cy="9.8" r="2.5" fill="#4a7fbd"/><rect x="3.5" y="6.5" width="1.6" height="1.6" fill="#fff"/><path d="M29.5 5.5 V1.5 H38.5 V5.5" fill="#fff" stroke="#4a7fbd" stroke-width="1.3"/><rect x="27" y="5.5" width="14" height="9" rx="1.5" fill="#4a7fbd"/><rect x="29" y="13" width="10" height="3.3" fill="#fff" stroke="#4a7fbd" stroke-width="1.2"/><rect x="35.5" y="10" width="1.3" height="1.3" fill="#fff"/><rect x="37.8" y="10" width="1.3" height="1.3" fill="#fff"/></svg>
<div class="b" style="left:994px;top:285px;width:1px;height:17px;background:#d0d0d0"></div>
<svg class="b" style="left:1006px;top:283px;" width="20" height="19" viewBox="0 0 20 19"><rect x="2.8" y="10.5" width="6.2" height="7.2" fill="#fff" stroke="#6a6a6a" stroke-width="1.1"/><path d="M5.9 10.5 V17.7" stroke="#6a6a6a" stroke-width="1"/><rect x="11.3" y="2.3" width="6.5" height="8" fill="#fff" stroke="#6a6a6a" stroke-width="1.1"/><rect x="11.3" y="1.8" width="2.5" height="2" fill="#555"/><path d="M5 8.5 V4.3 H9.5" fill="none" stroke="#3f78c0" stroke-width="1.1"/><path d="M9.2 2.6 L11 4.3 L9.2 6 Z M3.3 8 L5 10 L6.7 8 Z" fill="#3f78c0"/></svg>
<div class="t" style="left:1002px;transform:translateX(-50%);top:320.80px;font-size:13px;color:#111;letter-spacing:0.5px">Global: Half temperature rise (K)</div>
<svg class="b" style="left:0;top:0" width="1312" height="955"><path d="M792.5 343 V837" stroke="#dcdcdc" stroke-width="1"/><path d="M838.5 343 V837" stroke="#dcdcdc" stroke-width="1"/><path d="M898.5 343 V837" stroke="#dcdcdc" stroke-width="1"/><path d="M1004.5 343 V837" stroke="#dcdcdc" stroke-width="1"/><path d="M1110.5 343 V837" stroke="#dcdcdc" stroke-width="1"/><path d="M1216.5 343 V837" stroke="#dcdcdc" stroke-width="1"/><path d="M788 816.5 H1265" stroke="#dcdcdc" stroke-width="1"/><path d="M788 789.5 H1265" stroke="#dcdcdc" stroke-width="1"/><path d="M788 763.5 H1265" stroke="#dcdcdc" stroke-width="1"/><path d="M788 736.5 H1265" stroke="#dcdcdc" stroke-width="1"/><path d="M788 709.5 H1265" stroke="#dcdcdc" stroke-width="1"/><path d="M788 683.5 H1265" stroke="#dcdcdc" stroke-width="1"/><path d="M788 656.5 H1265" stroke="#dcdcdc" stroke-width="1"/><path d="M788 629.5 H1265" stroke="#dcdcdc" stroke-width="1"/><path d="M788 603.5 H1265" stroke="#dcdcdc" stroke-width="1"/><path d="M788 576.5 H1265" stroke="#dcdcdc" stroke-width="1"/><path d="M788 550.5 H1265" stroke="#dcdcdc" stroke-width="1"/><path d="M788 523.5 H1265" stroke="#dcdcdc" stroke-width="1"/><path d="M788 496.5 H1265" stroke="#dcdcdc" stroke-width="1"/><path d="M788 470.5 H1265" stroke="#dcdcdc" stroke-width="1"/><path d="M788 443.5 H1265" stroke="#dcdcdc" stroke-width="1"/><path d="M788 416.5 H1265" stroke="#dcdcdc" stroke-width="1"/><path d="M788 390.5 H1265" stroke="#dcdcdc" stroke-width="1"/><path d="M788 363.5 H1265" stroke="#dcdcdc" stroke-width="1"/><path d="M792.50 829.82 L794.31 829.82 L796.13 829.82 L797.94 829.82 L799.75 829.76 L801.56 829.37 L803.38 828.08 L805.19 825.27 L806.25 822.75 L807.29 819.55 L808.33 815.64 L809.38 811.03 L810.42 805.75 L811.46 799.84 L812.51 793.36 L813.55 786.38 L814.59 778.95 L815.64 771.14 L816.68 763.02 L817.72 754.63 L818.77 746.03 L819.81 737.29 L820.85 728.43 L821.90 719.50 L822.94 710.55 L823.98 701.60 L825.03 692.67 L826.07 683.81 L827.11 675.02 L828.16 666.33 L829.20 657.75 L830.24 649.29 L831.29 640.97 L832.33 632.80 L833.37 624.79 L834.42 616.93 L835.46 609.24 L836.50 601.72 L837.55 594.37 L838.59 587.18 L839.63 580.18 L840.68 573.34 L841.72 566.68 L842.76 560.18 L843.81 553.86 L844.85 547.71 L845.89 541.71 L846.94 535.89 L847.98 530.22 L849.02 524.71 L850.07 519.35 L851.11 514.14 L852.15 509.08 L853.20 504.17 L854.24 499.39 L855.28 494.76 L856.33 490.26 L857.37 485.89 L858.41 481.65 L859.46 477.53 L860.50 473.53 L861.54 469.65 L862.59 465.89 L863.63 462.24 L864.67 458.69 L865.72 455.25 L866.76 451.92 L867.80 448.68 L868.85 445.55 L869.89 442.50 L870.93 439.55 L871.98 436.68 L873.02 433.91 L874.06 431.21 L875.11 428.60 L876.15 426.07 L877.19 423.61 L878.24 421.23 L879.28 418.91 L880.32 416.67 L881.37 414.50 L882.41 412.39 L883.45 410.35 L884.50 408.37 L885.54 406.45 L886.58 404.59 L887.63 402.78 L888.67 401.03 L889.71 399.33 L890.76 397.69 L891.80 396.09 L892.84 394.55 L893.89 393.05 L894.93 391.59 L895.97 390.18 L897.02 388.82 L898.06 387.49 L899.10 386.21 L900.14 384.96 L901.19 383.75 L902.23 382.58 L903.27 381.45 L904.32 380.35 L905.36 379.28 L906.40 378.25 L907.45 377.25 L908.49 376.28 L909.53 375.34 L910.58 374.43 L911.62 373.54 L912.66 372.69 L913.71 371.86 L914.75 371.05 L915.79 370.27 L916.84 369.51 L917.88 368.78 L918.92 368.07 L919.97 367.38 L921.01 366.72 L922.05 366.07 L923.10 365.44 L924.14 364.84 L925.18 364.25 L926.23 363.68 L927.27 363.12 L928.31 362.59 L929.36 362.07 L930.40 361.57 L931.44 361.08 L932.49 360.61 L933.53 360.15 L934.57 359.71 L935.62 359.28 L936.66 358.86 L937.70 358.46 L938.75 358.07 L939.79 357.69 L940.83 357.33 L941.88 356.97 L942.92 356.63 L943.96 356.30 L945.01 355.98 L946.05 355.66 L947.09 355.36 L948.14 355.07 L949.18 354.79 L950.22 354.51 L951.27 354.25 L952.31 353.99 L953.35 353.74 L954.40 353.50 L955.44 353.27 L956.48 353.04 L957.53 352.82 L958.57 352.61 L959.61 352.40 L960.66 352.21 L961.70 352.01 L966.99 351.14 L977.09 349.82 L987.19 348.87 L997.29 348.20 L1007.39 347.74 L1017.49 347.43 L1027.59 347.23 L1037.69 347.12 L1047.80 347.07 L1057.90 347.07 L1068.00 347.10 L1078.10 347.15 L1088.20 347.23 L1098.30 347.32 L1108.40 347.42 L1118.50 347.52 L1128.60 347.63 L1138.70 347.75 L1148.80 347.87 L1158.91 347.99 L1169.01 348.12 L1179.11 348.24 L1189.21 348.37 L1199.31 348.50 L1209.41 348.62 L1219.51 348.75 L1229.61 348.88 L1239.71 349.01 L1249.81 349.14 L1259.91 349.26" fill="none" stroke="#0000ff" stroke-width="3" stroke-linejoin="round"/><rect x="790" y="827" width="3.5" height="6" fill="#0000ff"/><path d="M789 587.1 H1260" stroke="#ff0000" stroke-width="3" stroke-dasharray="2.8 4.5"/><rect x="787.5" y="342.5" width="478" height="495" fill="none" stroke="#000" stroke-width="1"/><path d="M792.5 343 V349 M792.5 837 V831" stroke="#000" stroke-width="1.2"/><path d="M838.5 343 V349 M838.5 837 V831" stroke="#000" stroke-width="1.2"/><path d="M898.5 343 V349 M898.5 837 V831" stroke="#000" stroke-width="1.2"/><path d="M1004.5 343 V349 M1004.5 837 V831" stroke="#000" stroke-width="1.2"/><path d="M1110.5 343 V349 M1110.5 837 V831" stroke="#000" stroke-width="1.2"/><path d="M1216.5 343 V349 M1216.5 837 V831" stroke="#000" stroke-width="1.2"/><path d="M788 816.5 H794 M1265 816.5 H1259" stroke="#000" stroke-width="1.2"/><path d="M788 789.5 H794 M1265 789.5 H1259" stroke="#000" stroke-width="1.2"/><path d="M788 763.5 H794 M1265 763.5 H1259" stroke="#000" stroke-width="1.2"/><path d="M788 736.5 H794 M1265 736.5 H1259" stroke="#000" stroke-width="1.2"/><path d="M788 709.5 H794 M1265 709.5 H1259" stroke="#000" stroke-width="1.2"/><path d="M788 683.5 H794 M1265 683.5 H1259" stroke="#000" stroke-width="1.2"/><path d="M788 656.5 H794 M1265 656.5 H1259" stroke="#000" stroke-width="1.2"/><path d="M788 629.5 H794 M1265 629.5 H1259" stroke="#000" stroke-width="1.2"/><path d="M788 603.5 H794 M1265 603.5 H1259" stroke="#000" stroke-width="1.2"/><path d="M788 576.5 H794 M1265 576.5 H1259" stroke="#000" stroke-width="1.2"/><path d="M788 550.5 H794 M1265 550.5 H1259" stroke="#000" stroke-width="1.2"/><path d="M788 523.5 H794 M1265 523.5 H1259" stroke="#000" stroke-width="1.2"/><path d="M788 496.5 H794 M1265 496.5 H1259" stroke="#000" stroke-width="1.2"/><path d="M788 470.5 H794 M1265 470.5 H1259" stroke="#000" stroke-width="1.2"/><path d="M788 443.5 H794 M1265 443.5 H1259" stroke="#000" stroke-width="1.2"/><path d="M788 416.5 H794 M1265 416.5 H1259" stroke="#000" stroke-width="1.2"/><path d="M788 390.5 H794 M1265 390.5 H1259" stroke="#000" stroke-width="1.2"/><path d="M788 363.5 H794 M1265 363.5 H1259" stroke="#000" stroke-width="1.2"/></svg>
<div class="t" style="right:529.5px;top:810.52px;font-size:12.5px;color:#111;letter-spacing:0.7px">293.2</div>
<div class="t" style="right:529.5px;top:783.87px;font-size:12.5px;color:#111;letter-spacing:0.7px">293.3</div>
<div class="t" style="right:529.5px;top:757.22px;font-size:12.5px;color:#111;letter-spacing:0.7px">293.4</div>
<div class="t" style="right:529.5px;top:730.58px;font-size:12.5px;color:#111;letter-spacing:0.7px">293.5</div>
<div class="t" style="right:529.5px;top:703.93px;font-size:12.5px;color:#111;letter-spacing:0.7px">293.6</div>
<div class="t" style="right:529.5px;top:677.28px;font-size:12.5px;color:#111;letter-spacing:0.7px">293.7</div>
<div class="t" style="right:529.5px;top:650.64px;font-size:12.5px;color:#111;letter-spacing:0.7px">293.8</div>
<div class="t" style="right:529.5px;top:623.99px;font-size:12.5px;color:#111;letter-spacing:0.7px">293.9</div>
<div class="t" style="right:529.5px;top:597.34px;font-size:12.5px;color:#111;letter-spacing:0.7px">294</div>
<div class="t" style="right:529.5px;top:570.69px;font-size:12.5px;color:#111;letter-spacing:0.7px">294.1</div>
<div class="t" style="right:529.5px;top:544.05px;font-size:12.5px;color:#111;letter-spacing:0.7px">294.2</div>
<div class="t" style="right:529.5px;top:517.40px;font-size:12.5px;color:#111;letter-spacing:0.7px">294.3</div>
<div class="t" style="right:529.5px;top:490.75px;font-size:12.5px;color:#111;letter-spacing:0.7px">294.4</div>
<div class="t" style="right:529.5px;top:464.11px;font-size:12.5px;color:#111;letter-spacing:0.7px">294.5</div>
<div class="t" style="right:529.5px;top:437.46px;font-size:12.5px;color:#111;letter-spacing:0.7px">294.6</div>
<div class="t" style="right:529.5px;top:410.81px;font-size:12.5px;color:#111;letter-spacing:0.7px">294.7</div>
<div class="t" style="right:529.5px;top:384.17px;font-size:12.5px;color:#111;letter-spacing:0.7px">294.8</div>
<div class="t" style="right:529.5px;top:357.52px;font-size:12.5px;color:#111;letter-spacing:0.7px">294.9</div>
<div class="t" style="left:792.8px;transform:translateX(-50%);top:844.22px;font-size:12.5px;color:#111;">0</div>
<div class="t" style="left:898.55px;transform:translateX(-50%);top:844.22px;font-size:12.5px;color:#111;">1</div>
<div class="t" style="left:1004.3px;transform:translateX(-50%);top:844.22px;font-size:12.5px;color:#111;">2</div>
<div class="t" style="left:1110.05px;transform:translateX(-50%);top:844.22px;font-size:12.5px;color:#111;">3</div>
<div class="t" style="left:1215.8px;transform:translateX(-50%);top:844.22px;font-size:12.5px;color:#111;">4</div>
<div class="t" style="left:1026.5px;transform:translateX(-50%);top:859.00px;font-size:13px;color:#111;letter-spacing:0.3px">Time (s)</div>
<div class="b" style="left:1068px;top:774px;width:182px;height:52.5px;background:#bdbdbd"></div>
<div class="b" style="left:1070px;top:771px;width:182px;height:53.5px;background:#fff;border:2px solid #444"></div>
<div class="b" style="left:1079px;top:784.5px;width:26.5px;height:1.6px;background:#0000ff"></div>
<svg class="b" style="left:1079px;top:806px;" width="27" height="4" viewBox="0 0 27 4"><path d="M0.5 2 H27" stroke="#ff0000" stroke-width="1.8" stroke-dasharray="1.4 2.3"/></svg>
<div class="t" style="left:1111px;top:778.80px;font-size:13px;color:#111;letter-spacing:0.55px">Temperature (K)</div>
<div class="t" style="left:1111px;top:800.80px;font-size:13px;color:#111;letter-spacing:0.5px">Half temperature rise</div>
<div class="t" style="left:1247px;top:901.42px;font-size:12.5px;color:#1f62c0;text-decoration:underline">About</div>
</body></html>
